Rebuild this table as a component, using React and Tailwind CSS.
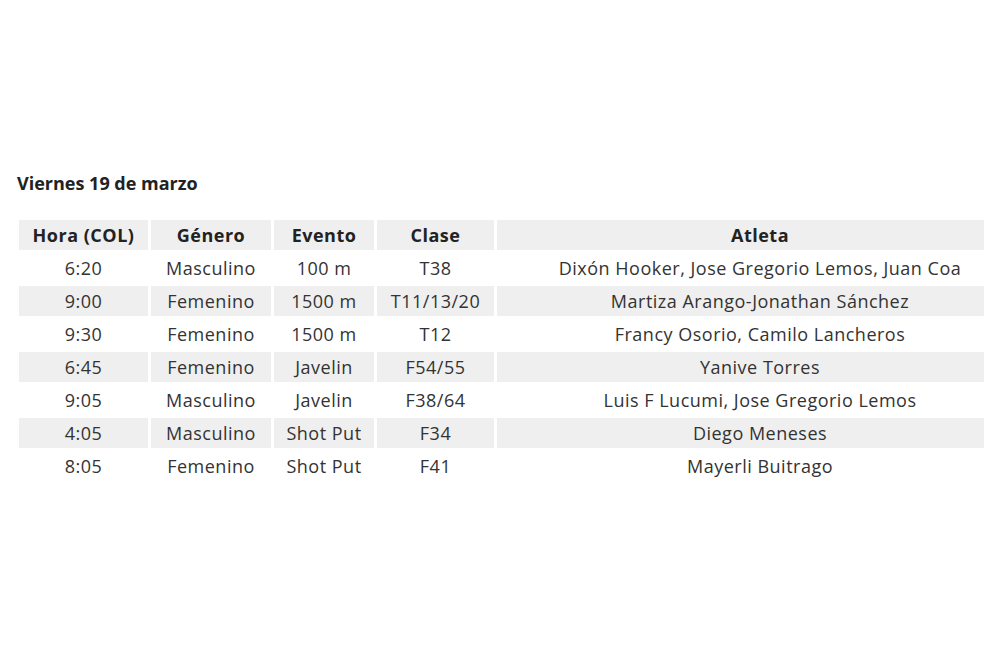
const rows = [
  ["6:20", "Masculino", "100 m", "T38", "Dixón Hooker, Jose Gregorio Lemos, Juan Coa"],
  ["9:00", "Femenino", "1500 m", "T11/13/20", "Martiza Arango-Jonathan Sánchez"],
  ["9:30", "Femenino", "1500 m", "T12", "Francy Osorio, Camilo Lancheros"],
  ["6:45", "Femenino", "Javelin", "F54/55", "Yanive Torres"],
  ["9:05", "Masculino", "Javelin", "F38/64", "Luis F Lucumi, Jose Gregorio Lemos"],
  ["4:05", "Masculino", "Shot Put", "F34", "Diego Meneses"],
  ["8:05", "Femenino", "Shot Put", "F41", "Mayerli Buitrago"],
];

const heads = ["Hora (COL)", "Género", "Evento", "Clase", "Atleta"];
const widths = ["w-[129px]", "w-[120px]", "w-[100px]", "w-[117px]", "w-[526px]"];

export default function App() {
  return (
    <div className="w-[984px] h-[655px] overflow-hidden bg-white text-[#333] font-['Open_Sans',sans-serif]">
      <div className="pt-[172px] pl-[17px]">
        <h2 className="text-[18px] font-bold leading-[22px] text-[#222]">Viernes 19 de marzo</h2>
      </div>
      <div className="w-[1100px]">
        <table className="mt-[23px] ml-[16px] w-[1010px] border-separate border-spacing-[3px] text-[18px] tracking-[0.5px] table-fixed">
          <thead>
            <tr>
              {heads.map((h, i) => (
                <th key={h} className={`${widths[i]} h-[30px] p-0 bg-[#efefef] font-bold text-[#222] text-center`}>
                  {h}
                </th>
              ))}
            </tr>
          </thead>
          <tbody>
            {rows.map((r, ri) => (
              <tr key={ri}>
                {r.map((c, ci) => (
                  <td key={ci} className={`h-[30px] p-0 text-center ${ri % 2 === 1 ? "bg-[#efefef]" : ""}`}>
                    {c}
                  </td>
                ))}
              </tr>
            ))}
          </tbody>
        </table>
      </div>
    </div>
  );
}
